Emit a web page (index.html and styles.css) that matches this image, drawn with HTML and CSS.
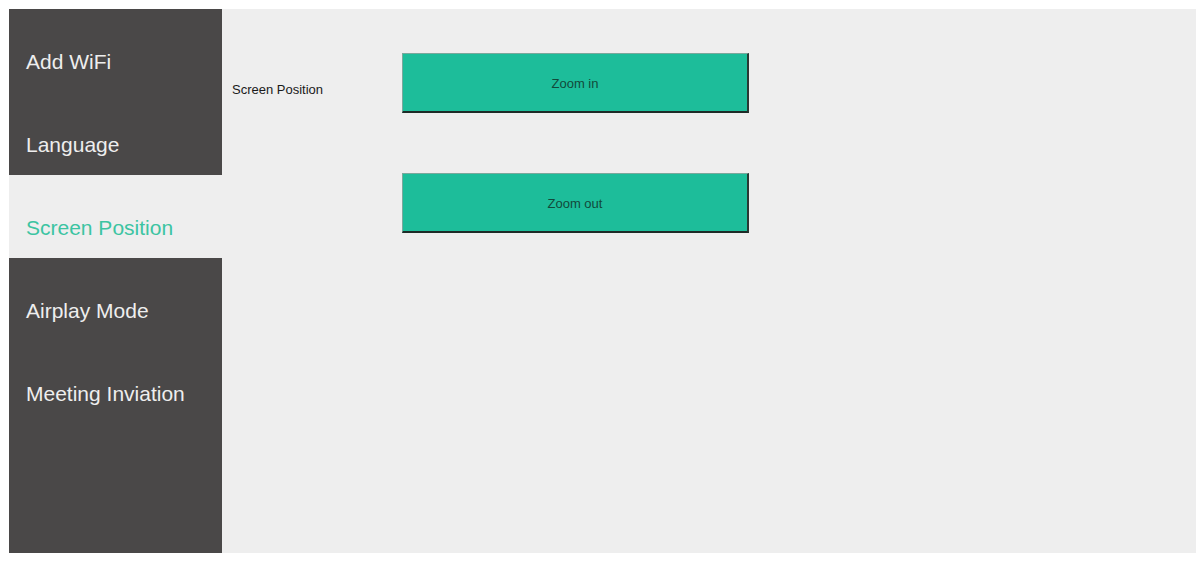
FILE: index.html
```html
<!DOCTYPE html>
<html>
<head>
<meta charset="utf-8">
<link rel="stylesheet" href="styles.css">
</head>
<body>
<div class="frame">
  <nav class="sidebar">
    <div class="item">Add WiFi</div>
    <div class="item">Language</div>
    <div class="item active">Screen Position</div>
    <div class="item">Airplay Mode</div>
    <div class="item">Meeting Inviation</div>
  </nav>
  <main class="content">
    <div class="label">Screen Position</div>
    <div class="buttons">
      <button class="btn">Zoom in</button>
      <button class="btn">Zoom out</button>
    </div>
  </main>
</div>
</body>
</html>
```
FILE: styles.css
```css
html, body {
  margin: 0;
  padding: 0;
  background: #ffffff;
  font-family: "Liberation Sans", Arial, sans-serif;
}
.frame {
  margin: 9px 0 0 9px;
  width: 1187px;
  height: 544px;
  display: flex;
  background: #eeeeee;
}
.sidebar {
  width: 213px;
  flex: none;
  background: #4a4848;
  display: flex;
  flex-direction: column;
}
.item {
  height: 83px;
  box-sizing: border-box;
  padding: 41px 0 0 17px;
  font-size: 21px;
  line-height: 24px;
  color: #eeeeee;
}
.item.active {
  background: #eeeeee;
  color: #3cc4a2;
}
.content {
  flex: 1;
  display: flex;
  padding: 44px 0 0 10px;
}
.label {
  width: 170px;
  margin-top: 29px;
  font-size: 13px;
  line-height: 15px;
  color: #1a1a1a;
}
.buttons {
  display: flex;
  flex-direction: column;
  gap: 60px;
}
.btn {
  width: 347px;
  height: 60px;
  box-sizing: border-box;
  background: #1dbd9a;
  border-style: solid;
  border-width: 1px 2px 2px 1px;
  border-color: #7aa89c #2a3833 #1e2b27 #7aa89c;
  font-family: "Liberation Sans", Arial, sans-serif;
  font-size: 13px;
  color: #124a3b;
  padding: 2px 0 0 0;
}
```
